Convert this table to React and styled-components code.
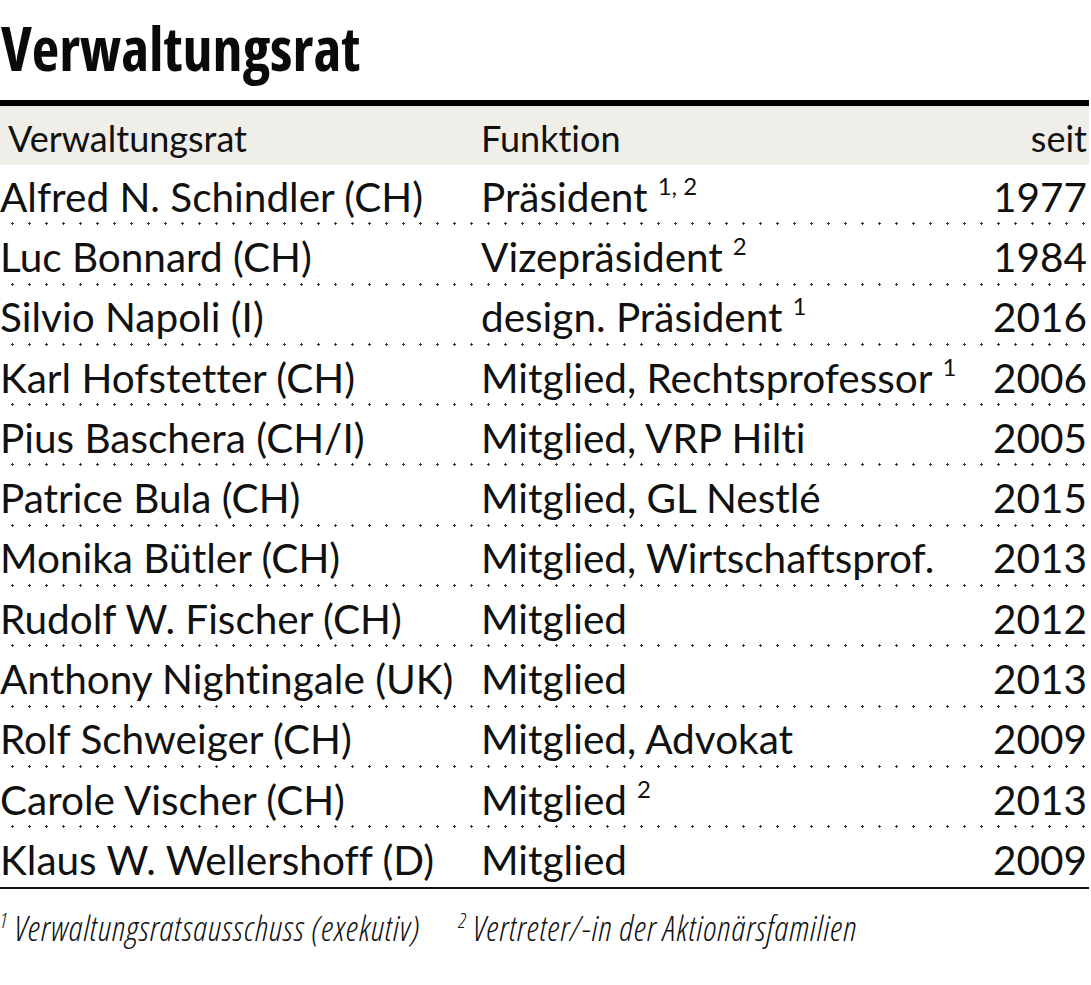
import styled, {createGlobalStyle} from 'styled-components'

const GlobalStyle = createGlobalStyle`
  html, body {
    margin: 0;
    padding: 0;
    background: #fff;
  }
  body {
    font-family: Lato, "Liberation Sans", sans-serif;
    font-variant-ligatures: none;
    color: #111;
  }
`;

const rows = [
    {name: 'Alfred N. Schindler (CH)', fn: 'Präsident', sup: '1, 2', year: '1977'},
    {name: 'Luc Bonnard (CH)', fn: 'Vizepräsident', sup: '2', year: '1984'},
    {name: 'Silvio Napoli (I)', fn: 'design. Präsident', sup: '1', year: '2016'},
    {name: 'Karl Hofstetter (CH)', fn: 'Mitglied, Rechtsprofessor', sup: '1', year: '2006'},
    {name: 'Pius Baschera (CH/I)', fn: 'Mitglied, VRP Hilti', year: '2005'},
    {name: 'Patrice Bula (CH)', fn: 'Mitglied, GL Nestlé', year: '2015'},
    {name: 'Monika Bütler (CH)', fn: 'Mitglied, Wirtschaftsprof.', year: '2013'},
    {name: 'Rudolf W. Fischer (CH)', fn: 'Mitglied', year: '2012'},
    {name: 'Anthony Nightingale (UK)', fn: 'Mitglied', year: '2013'},
    {name: 'Rolf Schweiger (CH)', fn: 'Mitglied, Advokat', year: '2009'},
    {name: 'Carole Vischer (CH)', fn: 'Mitglied', sup: '2', year: '2013'},
    {name: 'Klaus W. Wellershoff (D)', fn: 'Mitglied', year: '2009'},
];

export default function App(){
    return(
        <Page>
            <GlobalStyle/>
            <Title>Verwaltungsrat</Title>
            <Table>
                <HeadRow>
                    <Cell>Verwaltungsrat</Cell>
                    <Cell>Funktion</Cell>
                    <Year>seit</Year>
                </HeadRow>
                {rows.map((r, i) => (
                    <Row key={r.name} last={i === rows.length - 1}>
                        <Cell>{r.name}</Cell>
                        <Cell>
                            {r.fn}
                            {r.sup && <Sup>{r.sup}</Sup>}
                        </Cell>
                        <Year>{r.year}</Year>
                    </Row>
                ))}
            </Table>
            <Notes>
                <Note><NoteSup>1</NoteSup>Verwaltungsratsausschuss (exekutiv)</Note>
                <Note><NoteSup>2</NoteSup>Vertreter/-in der Aktionärsfamilien</Note>
            </Notes>
        </Page>
    )
}

const Page = styled.div`
  width: 1091px;
  height: 985px;
  overflow: hidden;
  padding-top: 14px;
  box-sizing: border-box;
`;

const Title = styled.h1`
  margin: 0 0 0 1px;
  font-family: "Open Sans", sans-serif;
  font-stretch: 75%;
  font-weight: 700;
  font-size: 60px;
  line-height: 68px;
  letter-spacing: 0;
  color: #0a0a0a;
`;

const Table = styled.div`
  width: 1089px;
  margin-top: 18px;
  border-top: 6px solid #000;
`;

const Row = styled.div`
  display: grid;
  grid-template-columns: 481px 1fr auto;
  align-items: center;
  height: 60.3px;
  font-size: 40.5px;
  padding-top: 2px;
  box-sizing: border-box;
  background-image: ${p => p.last
    ? 'linear-gradient(#111, #111)'
    : 'radial-gradient(circle, #333 1px, transparent 1.4px)'};
  background-size: ${p => p.last ? '100% 2px' : '17px 3px'};
  background-repeat: ${p => p.last ? 'no-repeat' : 'repeat-x'};
  background-position: ${p => p.last ? 'left bottom' : '4px bottom'};
`;

const HeadRow = styled(Row)`
  background: #efeee9;
  font-size: 36px;
  height: 59px;
  padding-left: 8px;
  padding-top: 4px;
  grid-template-columns: 473px 1fr auto;
`;

const Cell = styled.div`
  white-space: nowrap;
`;

const Year = styled.div`
  text-align: right;
  padding-right: 2px;
`;

const Sup = styled.sup`
  font-size: 24px;
  margin-left: 10px;
  vertical-align: 17px;
  line-height: 0;
`;

const Notes = styled.div`
  display: flex;
  gap: 38px;
  margin-top: 15px;
  font-family: "Open Sans", sans-serif;
  font-stretch: 75%;
  font-style: italic;
  font-weight: 300;
  font-size: 35px;
  letter-spacing: 0.85px;
`;

const Note = styled.div`
  white-space: nowrap;
`;

const NoteSup = styled.sup`
  font-size: 21px;
  margin-right: 6px;
  vertical-align: 13px;
  line-height: 0;
`;
